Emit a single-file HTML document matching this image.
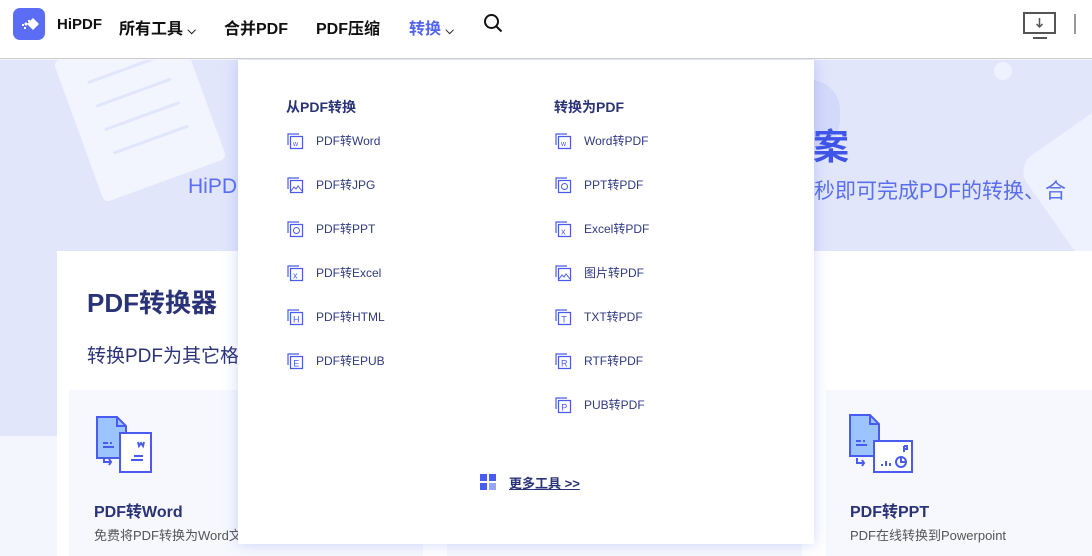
<!DOCTYPE html>
<html><head><meta charset="utf-8"><style>
*{margin:0;padding:0;box-sizing:border-box}
body{width:1092px;height:556px;overflow:hidden;position:relative;background:#f4f6fe;font-family:"Liberation Sans","Noto Sans CJK SC",sans-serif}
.abs{position:absolute}
.nav{left:0;top:0;width:1092px;height:59px;background:#fff;border-bottom:1px solid #ccc;z-index:3}
.nav span{position:absolute;top:15px;font-size:16px;font-weight:bold;color:#111}
.hero{left:0;top:60px;width:1092px;height:376px;background:#e1e6fb;overflow:hidden}
.main{left:57px;top:251px;width:1035px;height:305px;background:#fff}
.card{background:#f7f8fe;top:390px;height:166px}
.dd{left:238px;top:60px;width:576px;height:484px;background:#fff;box-shadow:0 0 14px rgba(90,110,240,.28);z-index:2}
.h{position:absolute;font-size:14px;font-weight:bold;color:#2b3378}
.it{position:absolute;font-size:12px;color:#2f3a80;height:16px;line-height:16px}
.it svg{position:absolute;left:-29px;top:0}
.ct{position:absolute;font-size:16px;font-weight:bold;color:#2b3378}
.cd{position:absolute;font-size:13px;color:#555}
.ln{position:absolute;height:3px;background:#e1e6fb;border-radius:2px;width:80px;left:25px}
</style></head><body>
<div class="abs nav">
 <svg class="abs" style="left:13px;top:8px" width="32" height="32" viewBox="0 0 32 32"><rect width="32" height="32" rx="7" fill="#5b6cf5"/><path d="M20 10l6 6-6 6-6-6z" fill="#fff"/><path d="M13 14l2 2-2 2-2-2z" fill="#fff"/><rect x="9" y="16" width="2" height="2" fill="#fff"/><rect x="11" y="19" width="2" height="2" fill="#fff"/><rect x="15" y="12" width="2" height="2" fill="#fff"/></svg>
 <span style="left:57px;top:16px;font-size:15px">HiPDF</span>
 <span style="left:119px">所有工具 <small style="font-size:11px">⌵</small></span>
 <span style="left:224px">合并PDF</span>
 <span style="left:316px">PDF压缩</span>
 <span style="left:409px;color:#5064f0">转换 <small style="font-size:11px;color:#222">⌵</small></span>
 <svg class="abs" style="left:483px;top:13px" width="20" height="20" viewBox="0 0 20 20" fill="none" stroke="#111" stroke-width="2"><circle cx="8.5" cy="8.5" r="6.5"/><path d="M13.5 13.5l5 5"/></svg>
 <svg class="abs" style="left:1023px;top:12px" width="34" height="28" viewBox="0 0 34 28" fill="none" stroke="#555" stroke-width="2"><rect x="1" y="1" width="31" height="20"/><path d="M10 26h14" /><path d="M16.5 6v9M13.5 12l3 3 3-3" stroke-width="1.5"/></svg>
 <div class="abs" style="left:1074px;top:14px;width:2px;height:20px;background:#999"></div>
</div>
<div class="abs hero">
 <div class="abs" style="left:75px;top:-25px;width:130px;height:150px;background:#f2f4fe;border-radius:6px;transform:rotate(-20deg)">
  <div class="ln" style="top:30px"></div><div class="ln" style="top:55px"></div><div class="ln" style="top:80px"></div><div class="ln" style="top:105px"></div>
 </div>
 <div class="abs" style="left:780px;top:20px;width:60px;height:70px;background:#d3daf9;border-radius:30px"></div>
 <div class="abs" style="left:1045px;top:50px;width:150px;height:150px;background:#eef1fe;border-radius:20px;transform:rotate(-35deg)"></div>
 <div class="abs" style="left:994px;top:2px;width:18px;height:18px;background:#eef1fe;border-radius:50%"></div>
 <div class="abs" style="left:813px;top:58px;font-size:36px;font-weight:bold;color:#3f54e8">案</div>
 <div class="abs" style="left:188px;top:115px;font-size:21px;color:#5a6ef0">HiPDF</div>
 <div class="abs" style="left:814px;top:115px;font-size:21px;color:#5a6ef0;white-space:nowrap">秒即可完成PDF的转换、合</div>
</div>
<div class="abs main">
 <div class="abs" style="left:30px;top:32px;font-size:26px;font-weight:bold;color:#2b3378">PDF转换器</div>
 <div class="abs" style="left:30px;top:90px;font-size:19px;color:#2b3378">转换PDF为其它格式</div>
</div>
<div class="abs card" style="left:69px;width:354px">
 <svg class="abs" style="left:27px;top:26px" width="58" height="58" viewBox="0 0 58 58" fill="none" stroke="#4a5cf0" stroke-width="2"><path d="M1 1h20l9 9v32h-29z" fill="#9cc4ff"/><path d="M21 1v9h9"/><rect x="24" y="17" width="31" height="39" fill="#fff"/><path d="M7 27h5M14 27h2M7 31h11M8 41v5h7M13 43l2 3-2 3"/><path d="M42 26l1 4 2-3 2 3 1-4M38 40h9M35 44h12"/></svg>
 <div class="ct" style="left:25px;top:108px">PDF转Word</div>
 <div class="cd" style="left:25px;top:135px">免费将PDF转换为Word文档</div>
</div>
<div class="abs card" style="left:447px;width:355px"></div>
<div class="abs card" style="left:826px;width:266px">
 <svg class="abs" style="left:23px;top:24px" width="66" height="60" viewBox="0 0 66 60" fill="none" stroke="#4a5cf0" stroke-width="2"><path d="M1 1h20l9 9v32h-29z" fill="#9cc4ff"/><path d="M21 1v9h9"/><rect x="25" y="27" width="38" height="31" fill="#fff"/><path d="M7 27h5M14 27h2M7 31h11M8 44v5h7M13 46l2 3-2 3"/><path d="M55 32v6M55 32h3v3h-3M33 52v-2M37 52v-5M41 52v-3"/><circle cx="52" cy="48" r="5"/><path d="M52 43v5h5"/></svg>
 <div class="ct" style="left:24px;top:108px">PDF转PPT</div>
 <div class="cd" style="left:24px;top:135px">PDF在线转换到Powerpoint</div>
</div>
<div class="abs dd">
 <div class="h" style="left:48px;top:37px">从PDF转换</div>
 <div class="h" style="left:316px;top:37px">转换为PDF</div>
 <svg width="0" height="0" style="position:absolute"><defs><g id="ic" fill="none" stroke="#4a5cf0" stroke-width="1.2"><path d="M1 12V1h11"/><path d="M3.5 15.5V3.5h12v12z" fill="#fff"/></g></defs></svg>
 <div class="it" style="left:78px;top:73px"><svg width="17" height="17" viewBox="0 0 17 17"><use href="#ic"/><text x="6" y="13" font-size="7" fill="#4a5cf0" font-family="Liberation Sans">w</text></svg>PDF转Word</div>
 <div class="it" style="left:78px;top:117px"><svg width="17" height="17" viewBox="0 0 17 17"><use href="#ic"/><path d="M4 14l3-4 2 2 2-3 4 5" stroke="#4a5cf0" fill="none" stroke-width="1"/></svg>PDF转JPG</div>
 <div class="it" style="left:78px;top:161px"><svg width="17" height="17" viewBox="0 0 17 17"><use href="#ic"/><circle cx="9.5" cy="9.5" r="3" stroke="#4a5cf0" fill="none"/></svg>PDF转PPT</div>
 <div class="it" style="left:78px;top:205px"><svg width="17" height="17" viewBox="0 0 17 17"><use href="#ic"/><text x="6" y="13.5" font-size="9" fill="#4a5cf0" font-family="Liberation Sans">x</text></svg>PDF转Excel</div>
 <div class="it" style="left:78px;top:249px"><svg width="17" height="17" viewBox="0 0 17 17"><use href="#ic"/><text x="6" y="13.5" font-size="9" fill="#4a5cf0" font-family="Liberation Sans">H</text></svg>PDF转HTML</div>
 <div class="it" style="left:78px;top:293px"><svg width="17" height="17" viewBox="0 0 17 17"><use href="#ic"/><text x="6.3" y="13.5" font-size="9" fill="#4a5cf0" font-family="Liberation Sans">E</text></svg>PDF转EPUB</div>
 <div class="it" style="left:346px;top:73px"><svg width="17" height="17" viewBox="0 0 17 17"><use href="#ic"/><text x="6" y="13" font-size="7" fill="#4a5cf0" font-family="Liberation Sans">w</text></svg>Word转PDF</div>
 <div class="it" style="left:346px;top:117px"><svg width="17" height="17" viewBox="0 0 17 17"><use href="#ic"/><circle cx="9.5" cy="9.5" r="3" stroke="#4a5cf0" fill="none"/></svg>PPT转PDF</div>
 <div class="it" style="left:346px;top:161px"><svg width="17" height="17" viewBox="0 0 17 17"><use href="#ic"/><text x="6" y="13.5" font-size="9" fill="#4a5cf0" font-family="Liberation Sans">x</text></svg>Excel转PDF</div>
 <div class="it" style="left:346px;top:205px"><svg width="17" height="17" viewBox="0 0 17 17"><use href="#ic"/><path d="M4 14l3-4 2 2 2-3 4 5" stroke="#4a5cf0" fill="none" stroke-width="1"/></svg>图片转PDF</div>
 <div class="it" style="left:346px;top:249px"><svg width="17" height="17" viewBox="0 0 17 17"><use href="#ic"/><text x="6.3" y="13.5" font-size="9" fill="#4a5cf0" font-family="Liberation Sans">T</text></svg>TXT转PDF</div>
 <div class="it" style="left:346px;top:293px"><svg width="17" height="17" viewBox="0 0 17 17"><use href="#ic"/><text x="6" y="13.5" font-size="9" fill="#4a5cf0" font-family="Liberation Sans">R</text></svg>RTF转PDF</div>
 <div class="it" style="left:346px;top:337px"><svg width="17" height="17" viewBox="0 0 17 17"><use href="#ic"/><text x="6.3" y="13.5" font-size="9" fill="#4a5cf0" font-family="Liberation Sans">P</text></svg>PUB转PDF</div>
 <svg class="abs" style="left:242px;top:414px" width="16" height="16"><rect width="7" height="7" fill="#4a5cf0"/><rect x="9" width="7" height="7" fill="#4a5cf0"/><rect y="9" width="7" height="7" fill="#4a5cf0"/><rect x="9" y="9" width="7" height="7" fill="#98a4f8"/></svg>
 <div class="abs" style="left:271px;top:413px;font-size:13px;font-weight:bold;color:#2b3378;text-decoration:underline">更多工具 &gt;&gt;</div>
</div>
</body></html>
